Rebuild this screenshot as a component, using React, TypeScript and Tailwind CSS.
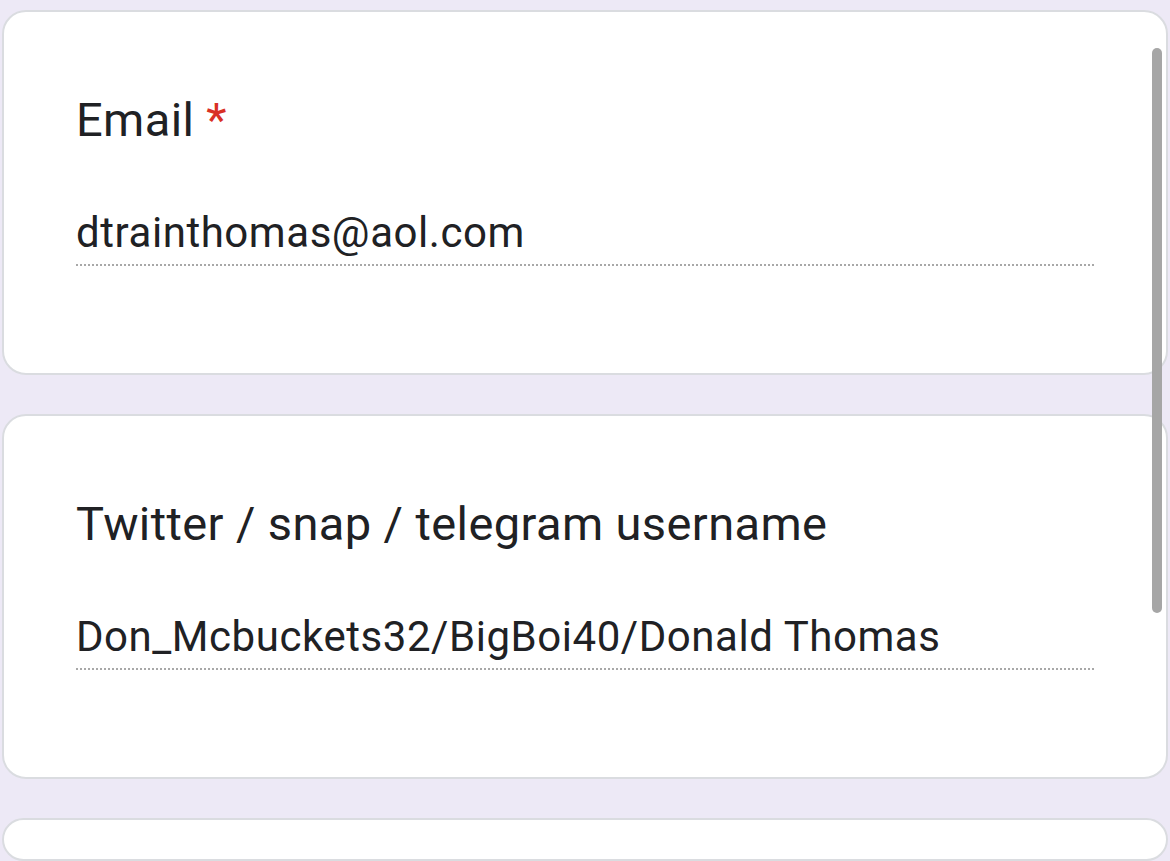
import React from 'react'

function QuestionCard({ label, value, required }: { label: string; value: string; required?: boolean }) {
  return (
    <div className="bg-white border-2 border-[#dadce0] rounded-[24px] pl-[72px] pr-[72px] pt-[80px] pb-[107px]">
      <div className="text-[47px] leading-[56px] text-[#202124] tracking-[0.4px]">
        {label}
        {required && <span className="text-[#d93025] ml-[12px]">*</span>}
      </div>
      <div className="mt-[59px] border-b-2 border-dotted border-[#a8a8a8] pb-[5px]">
        <div className="text-[42px] leading-[52px] text-[#202124] tracking-[0.55px]">{value}</div>
      </div>
    </div>
  )
}

export default function App() {
  return (
    <div
      className="relative w-[1170px] h-[861px] overflow-hidden bg-[#ede9f6] px-[2px] pt-[10px] flex flex-col gap-[39px]"
      style={{ fontFamily: 'Roboto, "Noto Sans", sans-serif' }}
    >
      <QuestionCard label="Email" value="dtrainthomas@aol.com" required />
      <QuestionCard label="Twitter / snap / telegram username" value="Don_Mcbuckets32/BigBoi40/Donald Thomas" />
      <div className="bg-white border-2 border-[#dadce0] rounded-[24px] h-[200px]" />

      {/* scrollbar overlay */}
      <div className="absolute left-[1152px] top-[48px] w-[10px] h-[565px] rounded-full bg-[#a6a6a6]" />
    </div>
  )
}
